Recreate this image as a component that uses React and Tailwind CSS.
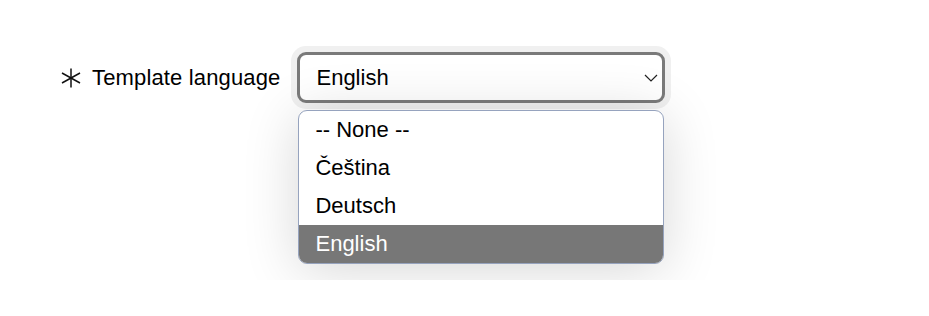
import React from "react";

const options = ["-- None --", "Čeština", "Deutsch", "English"];

const Asterisk = () => (
  <svg width="20" height="20" viewBox="0 0 20 20" className="shrink-0">
    <g stroke="#111" strokeWidth="1.5" strokeLinecap="butt">
      <line x1="10" y1="0.5" x2="10" y2="19.5" />
      <line x1="1" y1="5" x2="19" y2="15" />
      <line x1="1" y1="15" x2="19" y2="5" />
    </g>
  </svg>
);

export default function App() {
  const selected = "English";

  return (
    <div className="h-[280px] overflow-hidden bg-white font-['Liberation_Sans',Arial,sans-serif] text-black">
      <div className="flex items-start pl-[61px] pt-[52px]">
        {/* LABEL */}
        <div className="flex items-center h-[51px] gap-[11px]">
          <Asterisk />
          <span className="text-[22px] leading-none tracking-[0.15px]">Template language</span>
        </div>

        {/* SELECT + OPEN LIST */}
        <div className="ml-[17px] flex flex-col w-[368px]">
          <div className="h-[51px] flex items-center justify-between border-[3px] border-[#7a7a7a] rounded-[9px] bg-white pl-[16px] pr-[4px] shadow-[0_0_0_6px_#f0f0f0]">
            <span className="text-[22px] leading-none">{selected}</span>
            <svg width="14" height="8" viewBox="0 0 14 8">
              <path d="M1 1 L7 7 L13 1" fill="none" stroke="#222" strokeWidth="1.2" />
            </svg>
          </div>

          <ul className="mt-[7px] ml-[1px] w-[366px] border border-[#96a3be] rounded-[9px] bg-white overflow-hidden shadow-[0_6px_55px_rgba(0,0,0,0.16)]">
            {options.map((opt) => (
              <li
                key={opt}
                className={
                  opt === selected
                    ? "h-[38px] flex items-center pl-[16px] text-[22px] leading-none bg-[#777777] text-white"
                    : "h-[38px] flex items-center pl-[16px] text-[22px] leading-none"
                }
              >
                {opt}
              </li>
            ))}
          </ul>
        </div>
      </div>
    </div>
  );
}
